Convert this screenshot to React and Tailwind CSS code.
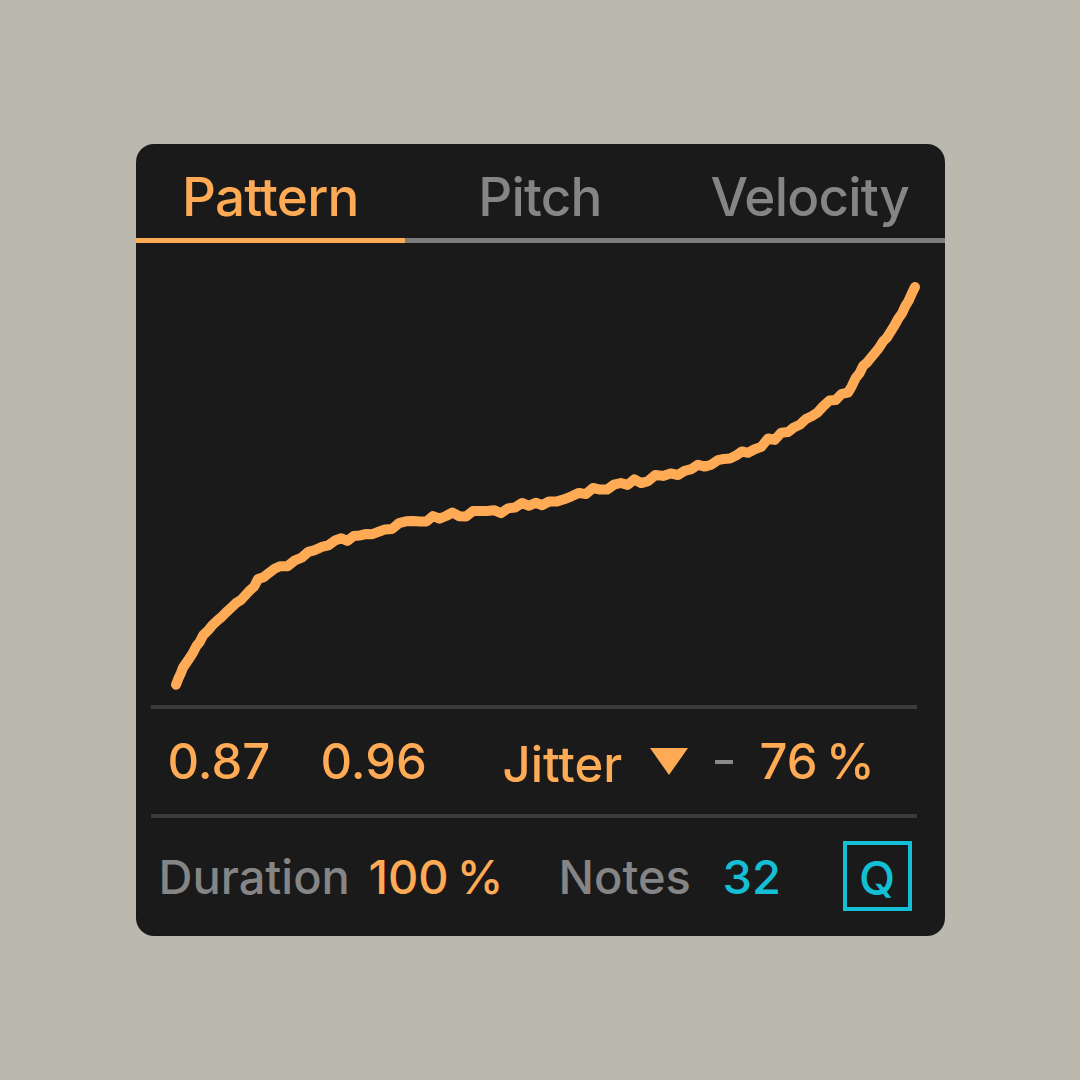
import { useMemo } from 'react';

// Rough control points of the curve, in page pixels
const CURVE = [
  [175, 685], [182, 667], [192, 653], [202, 635], [212, 625], [230, 608], [245, 595],
  [257, 582], [279, 567], [294, 560], [314, 550], [334, 542], [359, 536], [384, 528],
  [419, 520], [458, 514], [493, 512], [528, 503], [548, 502], [578, 494], [613, 486],
  [647, 479], [677, 472], [717, 462], [747, 450], [787, 432], [822, 408], [847, 390],
  [866, 363], [886, 337], [901, 313], [914, 287],
];

function noise(i) {
  const s = Math.sin(i * 12.9898 + 4.1) * 43758.5453;
  return s - Math.floor(s) - 0.5;
}

function buildPath() {
  const pts = [];
  let k = 0;
  for (let s = 0; s < CURVE.length - 1; s++) {
    const [x0, y0] = CURVE[s];
    const [x1, y1] = CURVE[s + 1];
    const steps = Math.max(1, Math.round(Math.hypot(x1 - x0, y1 - y0) / 7));
    for (let j = 0; j < steps; j++) {
      const t = j / steps;
      const x = x0 + (x1 - x0) * t;
      const y = y0 + (y1 - y0) * t;
      const amp = x > 250 && x < 870 ? 6 : 2;
      pts.push([x, y + noise(k++) * amp]);
    }
  }
  pts.push(CURVE[CURVE.length - 1]);
  return 'M' + pts.map(([x, y]) => `${x.toFixed(1)} ${y.toFixed(1)}`).join(' L');
}

export default function App() {
  const d = useMemo(buildPath, []);

  return (
    <div
      className="w-full h-screen bg-[#bbb9ad] flex items-center justify-center"
      style={{ fontFamily: 'Inter, "Noto Sans", sans-serif' }}
    >
      <div className="w-[809px] h-[792px] rounded-[18px] bg-[#1a1a1a] flex flex-col overflow-hidden font-medium">
        {/* tabs */}
        <div className="grid grid-cols-3 h-[94px] items-center pt-[12px] text-[53px] leading-none tracking-[-0.015em]">
          <div className="text-center text-[#ffaa55]">Pattern</div>
          <div className="text-center text-[#858585]">Pitch</div>
          <div className="text-center text-[#858585]">Velocity</div>
        </div>
        <div className="flex h-[5px]">
          <div className="w-[269px] bg-[#ffaa55]" />
          <div className="flex-1 bg-[#7d7d7d]" />
        </div>

        {/* curve */}
        <svg className="block w-[809px] h-[462px]" viewBox="135 243 809 462">
          <path
            d={d}
            fill="none"
            stroke="#ffaa55"
            strokeWidth="10"
            strokeLinecap="round"
            strokeLinejoin="round"
          />
        </svg>

        <div className="h-[4px] ml-[15px] mr-[28px] bg-[#3b3b3b]" />

        {/* values row */}
        <div className="h-[105px] flex items-center pl-[32px] text-[49px] leading-none text-[#ffaa55]">
          <span className="w-[153px]">0.87</span>
          <span className="w-[182px]">0.96</span>
          <span className="w-[147px] pt-[6px]">Jitter</span>
          <span className="w-[65px] flex">
            <svg className="w-[38px] h-[27px]" viewBox="0 0 38 27">
              <polygon points="0,0 38,0 19,27" fill="#ffaa55" />
            </svg>
          </span>
          <span className="w-[18px] h-[4px] bg-[#8a8a8a]" />
          <span className="ml-[27px]">76&#8201;%</span>
        </div>

        <div className="h-[4px] ml-[15px] mr-[28px] bg-[#3b3b3b]" />

        {/* footer row */}
        <div className="flex-1 flex items-center pl-[23px] pb-[2px] text-[47px] leading-none">
          <span className="w-[210px] text-[#858585]">Duration</span>
          <span className="w-[190px] text-[#ffaa55]">100&#8201;%</span>
          <span className="w-[164px] text-[#858585]">Notes</span>
          <span className="text-[#14bfd6]">32</span>
          <div className="ml-auto mr-[33px] w-[69px] h-[70px] border-[4px] border-[#14bfd6] flex items-center justify-center pt-[2px] text-[47px] text-[#14bfd6]">
            Q
          </div>
        </div>
      </div>
    </div>
  );
}
